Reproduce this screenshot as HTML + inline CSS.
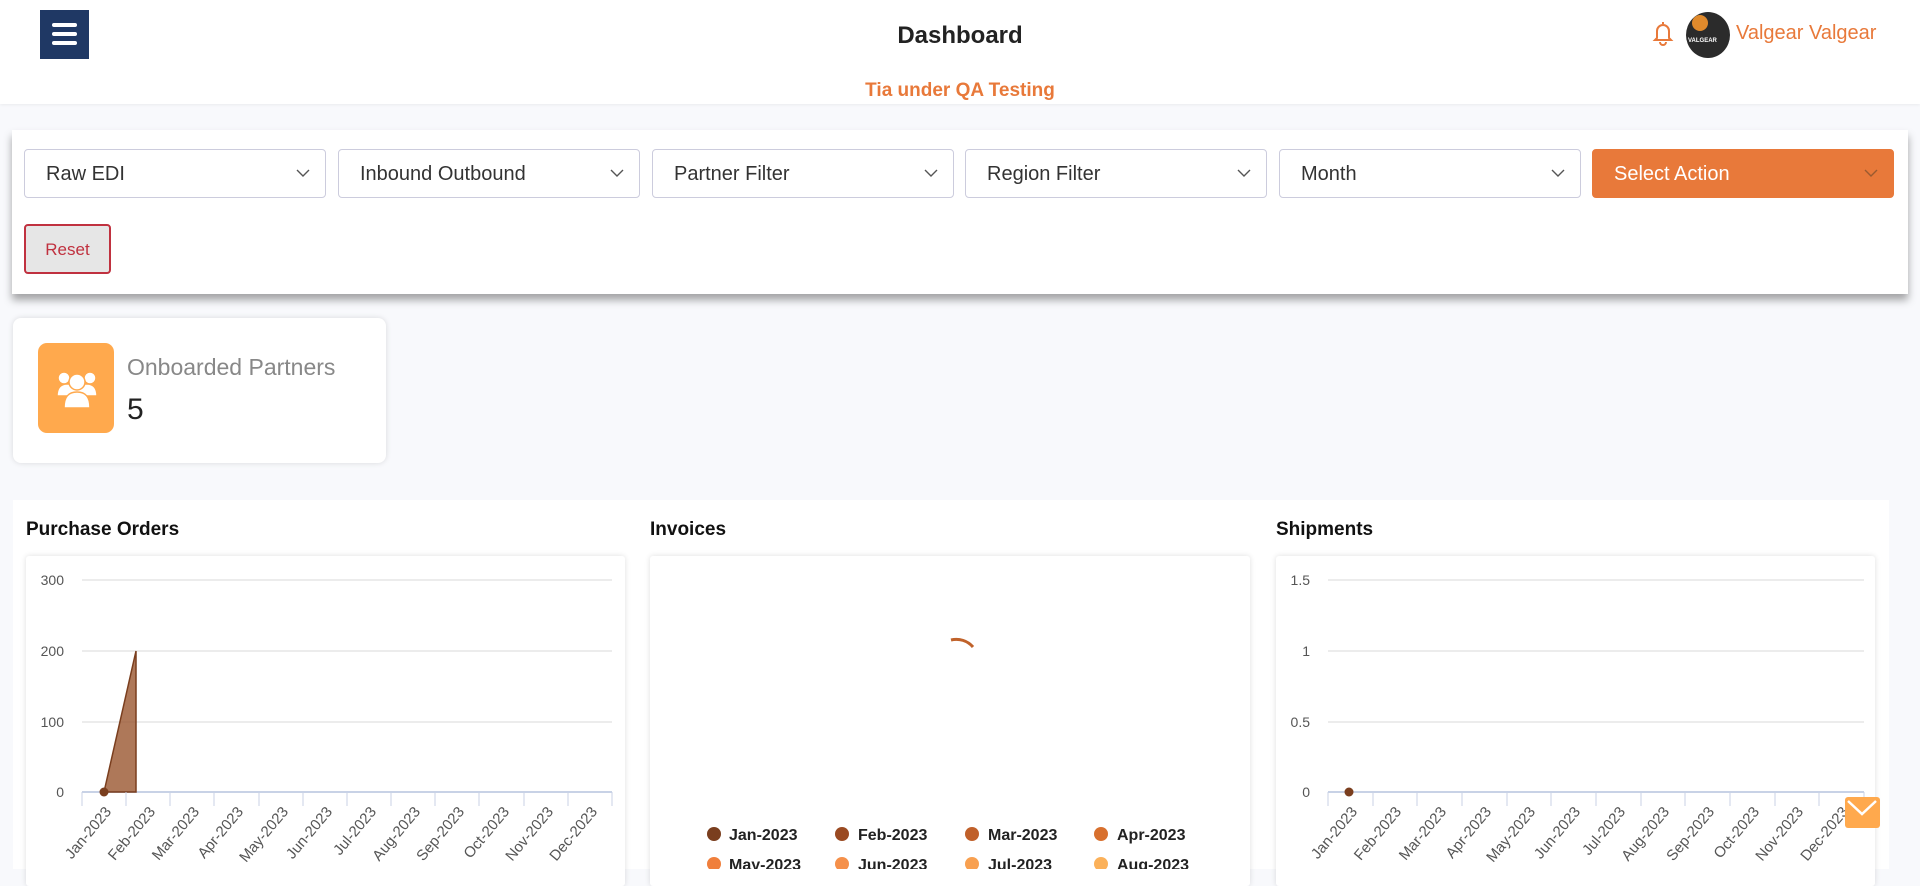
<!DOCTYPE html>
<html><head><meta charset="utf-8"><style>
*{box-sizing:border-box;margin:0;padding:0}
body{width:1920px;height:869px;overflow:hidden;background:#f8f9fc;font-family:"Liberation Sans",sans-serif;position:relative}
.abs{position:absolute}
.hdr{left:0;top:0;width:1920px;height:104px;background:#fff;box-shadow:0 1px 3px rgba(0,0,0,.06)}
.sel{position:absolute;top:149px;width:302px;height:49px;border:1px solid #ccd;border-radius:4px;background:#fff;font-size:20px;color:#333;padding:13px 0 0 21px}
.sel svg{position:absolute;right:14px;top:18px}
.ttl{font-size:19px;font-weight:bold;color:#111;top:519px}
.card{background:#fff;box-shadow:0 0 6px rgba(0,0,0,.13);border-radius:3px}
</style></head><body>
<div class="abs hdr"></div>
<div class="abs" style="left:40px;top:10px;width:49px;height:49px;background:#1f3864">
 <div class="abs" style="left:12px;top:13px;width:25px;height:4px;background:#fff;border-radius:2px"></div>
 <div class="abs" style="left:12px;top:22px;width:25px;height:4px;background:#fff;border-radius:2px"></div>
 <div class="abs" style="left:12px;top:31px;width:25px;height:4px;background:#fff;border-radius:2px"></div>
</div>
<div class="abs" style="left:0;width:1920px;top:22px;text-align:center;font-size:24px;font-weight:bold;color:#222">Dashboard</div>
<div class="abs" style="left:0;width:1920px;top:80px;text-align:center;font-size:19px;font-weight:bold;color:#e8793a">Tia under QA Testing</div>
<svg class="abs" style="left:1652px;top:20px" width="22" height="26" viewBox="0 0 22 26"><path d="M11 2v2M5 18V11a6 6 0 0 1 12 0v7l2 2H3z M8 22a3 3 0 0 0 6 0" fill="none" stroke="#e8793a" stroke-width="2"/></svg>
<div class="abs" style="left:1686px;top:12px;width:44px;height:46px;border-radius:50%;background:#2b2b2b;overflow:hidden">
 <div class="abs" style="left:6px;top:3px;width:16px;height:16px;border-radius:50%;background:#e08a2c"></div>
 <div class="abs" style="left:2px;top:26px;font-size:6px;color:#fff;font-weight:bold">VALGEAR</div>
</div>
<div class="abs" style="left:1736px;top:22px;font-size:20px;color:#e8793a">Valgear Valgear</div>

<div class="abs" style="left:12px;top:130px;width:1896px;height:164px;background:#fff;box-shadow:0 6px 8px rgba(0,0,0,.35)"></div>
<div class="sel" style="left:24px">Raw EDI<svg width="16" height="10"><path d="M2 2l6 6 6-6" fill="none" stroke="#555" stroke-width="1.4"/></svg></div>
<div class="sel" style="left:338px">Inbound Outbound<svg width="16" height="10"><path d="M2 2l6 6 6-6" fill="none" stroke="#555" stroke-width="1.4"/></svg></div>
<div class="sel" style="left:652px">Partner Filter<svg width="16" height="10"><path d="M2 2l6 6 6-6" fill="none" stroke="#555" stroke-width="1.4"/></svg></div>
<div class="sel" style="left:965px">Region Filter<svg width="16" height="10"><path d="M2 2l6 6 6-6" fill="none" stroke="#555" stroke-width="1.4"/></svg></div>
<div class="sel" style="left:1279px">Month<svg width="16" height="10"><path d="M2 2l6 6 6-6" fill="none" stroke="#555" stroke-width="1.4"/></svg></div>
<div class="sel" style="left:1592px;background:#e8793a;border-color:#e8793a;color:#fff">Select Action<svg width="16" height="10"><path d="M2 2l6 6 6-6" fill="none" stroke="#9a5a30" stroke-width="1.4"/></svg></div>
<div class="abs" style="left:24px;top:224px;width:87px;height:50px;background:#e6e6e6;border:2px solid #c0313f;border-radius:4px;color:#c0313f;font-size:17px;text-align:center;padding-top:14px">Reset</div>

<div class="abs card" style="left:13px;top:318px;width:373px;height:145px;border-radius:8px"></div>
<div class="abs" style="left:38px;top:343px;width:76px;height:90px;background:#ffa94d;border-radius:9px">
 <svg class="abs" style="left:18px;top:27px" width="42" height="38" viewBox="0 0 42 38"><g fill="#fff" stroke="#ffa94d" stroke-width="1.5"><circle cx="8" cy="8" r="6"/><circle cx="34" cy="8" r="6"/><path d="M1 26c0-9 4-12 10-12h20c6 0 10 3 10 12z"/><circle cx="21" cy="12" r="8"/><path d="M8 38c0-12 5-16 13-16s13 4 13 16z"/></g></svg>
</div>
<div class="abs" style="left:127px;top:354px;font-size:23px;color:#888">Onboarded Partners</div>
<div class="abs" style="left:127px;top:393px;font-size:30px;color:#222">5</div>

<div class="abs" style="left:13px;top:500px;width:1876px;height:369px;background:#fff"></div>
<div class="abs ttl" style="left:26px">Purchase Orders</div>
<div class="abs ttl" style="left:650px">Invoices</div>
<div class="abs ttl" style="left:1276px">Shipments</div>
<div class="abs card" style="left:26px;top:556px;width:599px;height:330px"></div>
<div class="abs card" style="left:650px;top:556px;width:600px;height:330px"></div>
<div class="abs card" style="left:1276px;top:556px;width:599px;height:330px"></div>

<svg class="abs" style="left:0;top:0" width="1920" height="869" font-family="Liberation Sans,sans-serif" font-size="14" fill="#555">
 <g stroke="#e6e6e6" stroke-width="1.5"><line x1="82" y1="580" x2="612" y2="580"/><line x1="82" y1="651" x2="612" y2="651"/><line x1="82" y1="722" x2="612" y2="722"/>
 <line x1="1328" y1="580" x2="1864" y2="580"/><line x1="1328" y1="651" x2="1864" y2="651"/><line x1="1328" y1="722" x2="1864" y2="722"/></g>
 <g stroke="#c8d2e6"><line x1="82" y1="792" x2="612" y2="792" stroke-width="2"/><line x1="1328" y1="792" x2="1864" y2="792" stroke-width="2"/></g>
 <g text-anchor="end"><text x="64" y="585">300</text><text x="64" y="656">200</text><text x="64" y="727">100</text><text x="64" y="797">0</text>
 <text x="1310" y="585">1.5</text><text x="1310" y="656">1</text><text x="1310" y="727">0.5</text><text x="1310" y="797">0</text></g>
 <path d="M104 792L136 651V792Z" fill="#9a5630" fill-opacity=".8" stroke="#7a3e1e" stroke-width="1.5"/>
 <circle cx="104" cy="792" r="4.5" fill="#7a3e1e"/>
 <circle cx="1349" cy="792" r="4.5" fill="#7a3e1e"/>
 <path d="M951 640a22 22 0 0 1 22 7" fill="none" stroke="#c0622a" stroke-width="3"/>
 <g font-size="16" font-weight="bold" fill="#222">
  <circle cx="714" cy="834" r="7" fill="#7a3e1e"/><text x="729" y="840">Jan-2023</text>
  <circle cx="842" cy="834" r="7" fill="#9a4a22"/><text x="858" y="840">Feb-2023</text>
  <circle cx="972" cy="834" r="7" fill="#c0602a"/><text x="988" y="840">Mar-2023</text>
  <circle cx="1101" cy="834" r="7" fill="#d8702e"/><text x="1117" y="840">Apr-2023</text>
  <circle cx="714" cy="864" r="7" fill="#f07f3c"/><text x="729" y="870">May-2023</text>
  <circle cx="842" cy="864" r="7" fill="#f5904a"/><text x="858" y="870">Jun-2023</text>
  <circle cx="972" cy="864" r="7" fill="#f8a050"/><text x="988" y="870">Jul-2023</text>
  <circle cx="1101" cy="864" r="7" fill="#fbb15a"/><text x="1117" y="870">Aug-2023</text>
 </g>
 <g stroke="#c8d2e6" stroke-width="1">
  <line x1="82" y1="792" x2="82" y2="806"/><line x1="126" y1="792" x2="126" y2="806"/><line x1="170" y1="792" x2="170" y2="806"/><line x1="214" y1="792" x2="214" y2="806"/><line x1="259" y1="792" x2="259" y2="806"/><line x1="303" y1="792" x2="303" y2="806"/><line x1="347" y1="792" x2="347" y2="806"/><line x1="391" y1="792" x2="391" y2="806"/><line x1="435" y1="792" x2="435" y2="806"/><line x1="479" y1="792" x2="479" y2="806"/><line x1="524" y1="792" x2="524" y2="806"/><line x1="568" y1="792" x2="568" y2="806"/><line x1="612" y1="792" x2="612" y2="806"/>
  <line x1="1328" y1="792" x2="1328" y2="806"/><line x1="1373" y1="792" x2="1373" y2="806"/><line x1="1417" y1="792" x2="1417" y2="806"/><line x1="1462" y1="792" x2="1462" y2="806"/><line x1="1507" y1="792" x2="1507" y2="806"/><line x1="1551" y1="792" x2="1551" y2="806"/><line x1="1596" y1="792" x2="1596" y2="806"/><line x1="1641" y1="792" x2="1641" y2="806"/><line x1="1685" y1="792" x2="1685" y2="806"/><line x1="1730" y1="792" x2="1730" y2="806"/><line x1="1775" y1="792" x2="1775" y2="806"/><line x1="1819" y1="792" x2="1819" y2="806"/><line x1="1864" y1="792" x2="1864" y2="806"/>
 </g>
 <g font-size="15" text-anchor="end">
  <text transform="translate(112,812) rotate(-50)">Jan-2023</text><text transform="translate(156,812) rotate(-50)">Feb-2023</text><text transform="translate(200,812) rotate(-50)">Mar-2023</text><text transform="translate(244,812) rotate(-50)">Apr-2023</text><text transform="translate(289,812) rotate(-50)">May-2023</text><text transform="translate(333,812) rotate(-50)">Jun-2023</text><text transform="translate(377,812) rotate(-50)">Jul-2023</text><text transform="translate(421,812) rotate(-50)">Aug-2023</text><text transform="translate(465,812) rotate(-50)">Sep-2023</text><text transform="translate(510,812) rotate(-50)">Oct-2023</text><text transform="translate(554,812) rotate(-50)">Nov-2023</text><text transform="translate(598,812) rotate(-50)">Dec-2023</text>
  <text transform="translate(1358,812) rotate(-50)">Jan-2023</text><text transform="translate(1402,812) rotate(-50)">Feb-2023</text><text transform="translate(1447,812) rotate(-50)">Mar-2023</text><text transform="translate(1492,812) rotate(-50)">Apr-2023</text><text transform="translate(1536,812) rotate(-50)">May-2023</text><text transform="translate(1581,812) rotate(-50)">Jun-2023</text><text transform="translate(1626,812) rotate(-50)">Jul-2023</text><text transform="translate(1670,812) rotate(-50)">Aug-2023</text><text transform="translate(1715,812) rotate(-50)">Sep-2023</text><text transform="translate(1760,812) rotate(-50)">Oct-2023</text><text transform="translate(1804,812) rotate(-50)">Nov-2023</text><text transform="translate(1849,812) rotate(-50)">Dec-2023</text>
 </g>
 <rect x="1845" y="797" width="35" height="31" rx="3" fill="#ffa94d"/>
 <path d="M1848 801l14 13 14-13" fill="none" stroke="#fff" stroke-width="2.5"/>
</svg>
</body></html>
